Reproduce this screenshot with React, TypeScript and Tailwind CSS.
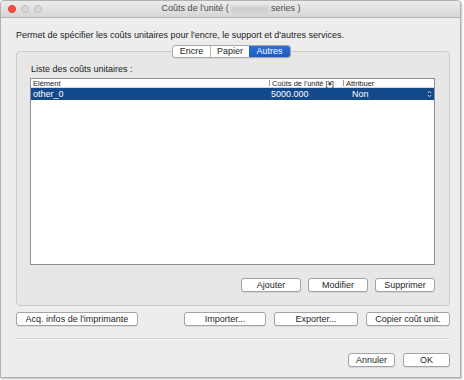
import React from "react";

const font = { fontFamily: '"Liberation Sans", Arial, sans-serif' };

function Btn({ label, w }: { label: string; w: string }) {
  return (
    <div
      className={`${w} h-[14px] flex items-center justify-center bg-white border border-[#a3a3a3] rounded-[3px] text-[9px] leading-none text-[#1e1e1e] shadow-[0_1px_0_rgba(0,0,0,0.08)]`}
    >
      {label}
    </div>
  );
}

export default function App() {
  return (
    <div className="w-[464px] h-[380px] bg-white" style={font}>
      <div className="w-[461px] h-[378px] flex flex-col bg-[#ededed] border border-[#b0b0b0] rounded-t-[4px] shadow-[1px_1px_2px_rgba(0,0,0,0.25)] overflow-hidden">
        {/* title bar */}
        <div className="h-[17px] shrink-0 flex items-center relative bg-gradient-to-b from-[#ececec] to-[#d6d6d6] border-b border-[#b4b4b4]">
          <div className="flex items-center gap-[5px] pl-[7px]">
            <div className="w-[8px] h-[8px] rounded-full bg-[#fc4b45] border border-[#de3a35]" />
            <div className="w-[8px] h-[8px] rounded-full bg-[#d8d8d8] border border-[#c0c0c0]" />
            <div className="w-[8px] h-[8px] rounded-full bg-[#d8d8d8] border border-[#c0c0c0]" />
          </div>
          <div className="flex-1 flex justify-center items-center text-[9px] text-[#4a4a4a] pr-[40px]">
            <span>Coûts de l'unité (</span>
            <span className="inline-block w-[38px] h-[7px] mx-[2px] bg-[#d0d0d0] blur-[1px]" />
            <span>series )</span>
          </div>
        </div>

        {/* body */}
        <div className="flex-1 flex flex-col px-[14px]">
          <div className="mt-[12px] pl-[1px] text-[9px] leading-[10px] text-[#1a1a1a]">
            Permet de spécifier les coûts unitaires pour l'encre, le support et d'autres services.
          </div>

          {/* tabs */}
          <div className="mt-[5px] self-center relative z-10 flex h-[13px] text-[9px] leading-none rounded-[3px] border border-[#a8a8a8] bg-white overflow-hidden shadow-[0_1px_0_rgba(0,0,0,0.06)] ml-[2px]">
            <div className="w-[38px] flex items-center justify-center text-[#1e1e1e] border-r border-[#b5b5b5]">Encre</div>
            <div className="w-[38px] flex items-center justify-center text-[#1e1e1e]">Papier</div>
            <div className="w-[41px] flex items-center justify-center text-white bg-gradient-to-b from-[#2a6fd6] to-[#1a5cc2]">Autres</div>
          </div>

          {/* group box */}
          <div className="-mt-[7px] ml-[1px] w-[434px] h-[255px] flex flex-col bg-[#e7e7e7] border border-[#cacaca] rounded-[4px] px-[13px]">
            <div className="mt-[12px] pl-[1px] text-[9px] leading-[10px] text-[#1a1a1a]">Liste des coûts unitaires :</div>
            <div className="mt-[4px] w-[405px] h-[187px] bg-white border border-[#8f8f8f] flex flex-col">
              <div className="h-[9px] flex text-[7.5px] leading-[9px] text-[#222] border-b border-[#d6d6d6]">
                <div className="w-[238px] pl-[2px]">Elément</div>
                <div className="w-[74px] pl-[2px] border-l border-[#9a9a9a] my-[1px] leading-[7px]">Coûts de l'unité [¥]</div>
                <div className="flex-1 pl-[2px] border-l border-[#9a9a9a] my-[1px] leading-[7px]">Attribuer</div>
              </div>
              <div className="h-[12px] flex items-center bg-[#134a8b] text-white text-[9px] leading-none">
                <div className="w-[238px] pl-[2px]">other_0</div>
                <div className="w-[74px] pl-[2px]">5000.000</div>
                <div className="flex-1 pl-[9px] flex items-center justify-between pr-[2px]">
                  <span>Non</span>
                  <svg width="5" height="8" viewBox="0 0 5 8">
                    <path d="M0.8 3 L2.5 1.2 L4.2 3" fill="none" stroke="#c8d4e6" strokeWidth="0.9" />
                    <path d="M0.8 5 L2.5 6.8 L4.2 5" fill="none" stroke="#c8d4e6" strokeWidth="0.9" />
                  </svg>
                </div>
              </div>
            </div>
            <div className="mt-[13px] flex justify-end gap-[7px] pr-[1px]">
              <Btn label="Ajouter" w="w-[60px]" />
              <Btn label="Modifier" w="w-[60px]" />
              <Btn label="Supprimer" w="w-[60px]" />
            </div>
          </div>

          {/* second row */}
          <div className="mt-[6px] flex ml-[1px] w-[434px]">
            <Btn label="Acq. infos de l'imprimante" w="w-[122px]" />
            <div className="w-[46px]" />
            <Btn label="Importer..." w="w-[82px]" />
            <div className="w-[8px]" />
            <Btn label="Exporter..." w="w-[84px]" />
            <div className="w-[8px]" />
            <Btn label="Copier coût unit." w="w-[84px]" />
          </div>

          <div className="mt-[12px] ml-[1px] w-[434px] h-[1px] bg-[#d3d3d3] border-b border-[#f8f8f8] box-content" />

          <div className="mt-[13px] flex justify-end gap-[8px] w-[435px]">
            <Btn label="Annuler" w="w-[47px]" />
            <Btn label="OK" w="w-[47px]" />
          </div>
        </div>
      </div>
    </div>
  );
}
